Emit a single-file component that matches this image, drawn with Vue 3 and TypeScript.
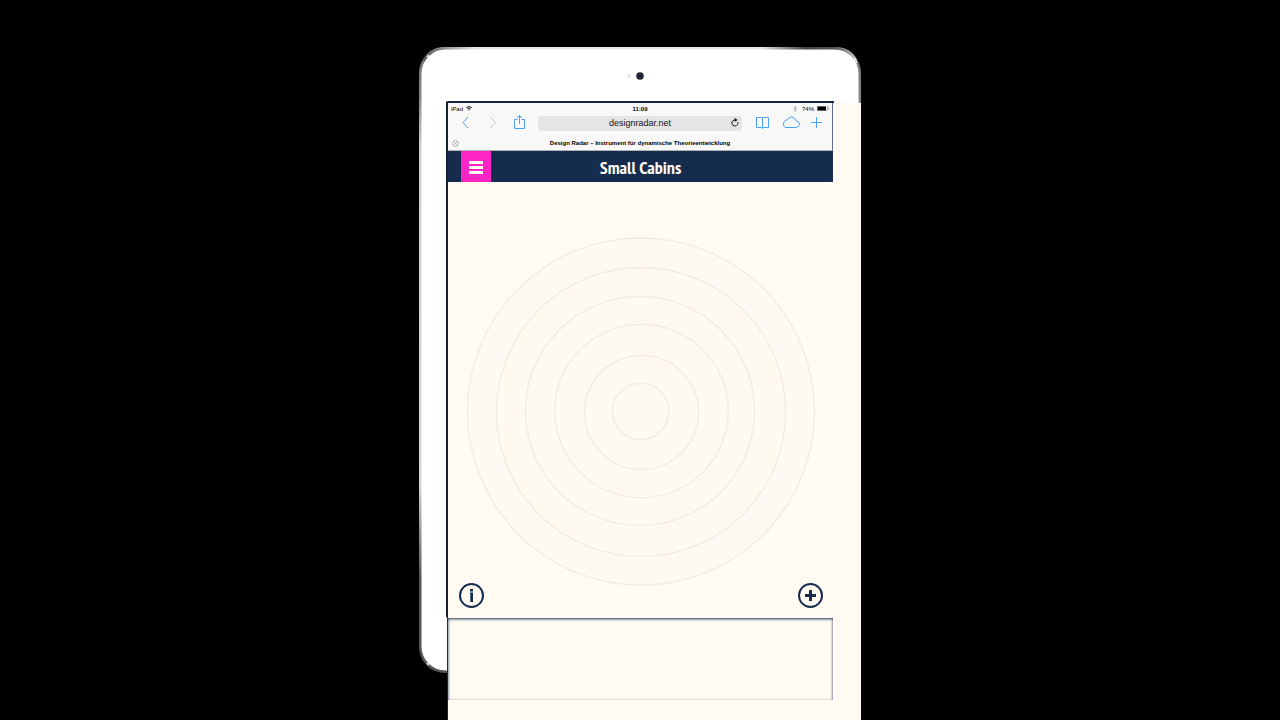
<script setup lang="ts">
import { ref } from 'vue'

interface Ring {
  cx: number
  cy: number
  r: number
  fill: string
}

const address = ref('designradar.net')

const rings: Ring[] = [
  { cx: 193, cy: 229.5, r: 173.5, fill: '#fff9f3' },
  { cx: 193, cy: 230, r: 144.5, fill: '#fffaef' },
  { cx: 192, cy: 229, r: 114.5, fill: '#fffaef' },
  { cx: 193.5, cy: 229, r: 86.8, fill: '#fffaef' },
  { cx: 193.5, cy: 230.5, r: 57, fill: '#fffaef' },
  { cx: 192.6, cy: 229.5, r: 28.2, fill: '#fffaef' },
]
</script>

<template>
  <main class="page">
    <div class="tablet">
      <svg class="shell" viewBox="0 0 442 626" aria-hidden="true">
        <defs>
          <linearGradient id="rimSide" x1="0" y1="0" x2="0" y2="1">
            <stop offset="0" stop-color="#888" />
            <stop offset="0.03" stop-color="#777" />
            <stop offset="0.08" stop-color="#888" />
            <stop offset="0.16" stop-color="#d0d0d0" />
            <stop offset="0.7" stop-color="#d6d6d6" />
            <stop offset="0.85" stop-color="#555" />
            <stop offset="1" stop-color="#555" />
          </linearGradient>
          <linearGradient id="rimTop" x1="0" y1="0" x2="1" y2="0">
            <stop offset="0" stop-color="#555" />
            <stop offset="0.07" stop-color="#aaa" />
            <stop offset="0.12" stop-color="#e6e6e6" />
            <stop offset="0.78" stop-color="#e6e6e6" />
            <stop offset="0.88" stop-color="#444" />
            <stop offset="0.95" stop-color="#555" />
            <stop offset="1" stop-color="#ccc" />
          </linearGradient>
        </defs>
        <rect width="442" height="626" rx="26" fill="url(#rimSide)" />
        <path d="M4 13Q10 0 26 0H416Q432 0 438 13L416 30H26Z" fill="url(#rimTop)" />
        <rect x="2.500" y="2.500" width="437" height="621" rx="24" fill="#fff" />
        <path d="M8 10L10 8M435 11L438 16M8 616L10 618" stroke="#eee" stroke-width="1.500" />
        <circle cx="210" cy="29" r="2" fill="#e8e8e8" />
        <circle cx="221" cy="29" r="3.800" fill="#23232b" />
        <circle cx="220.500" cy="29" r="1.800" fill="#17204a" />
      </svg>

      <div class="display">
        <div class="screen">
          <header class="browser">
            <div class="status">
              <span class="carrier">iPad
                <svg width="6" height="5" viewBox="0 0 12 10" aria-hidden="true">
                  <path d="M0 3Q6 -3 12 3L10.600 4.500Q6 0 1.400 4.500ZM2.500 5.500Q6 2.200 9.500 5.500L8.200 6.900Q6 5 3.800 6.900ZM4.500 7.800Q6 6.400 7.500 7.800L6 9.600Z" fill="#222" />
                </svg>
              </span>
              <strong>11:09</strong>
              <span class="power">
                <svg class="bluetooth" width="4" height="6" viewBox="0 0 4 6" aria-hidden="true">
                  <path d="M.5 1.500L3.500 4.300L2 5.700V.3L3.500 1.700L.5 4.500" fill="none" stroke="#999" stroke-width=".6" />
                </svg>
                74%
                <svg width="12" height="5" viewBox="0 0 12 5" aria-hidden="true">
                  <rect x=".25" y=".25" width="10.500" height="4.500" rx=".8" fill="none" stroke="#777" stroke-width=".5" />
                  <rect x=".5" y=".5" width="8.500" height="4" fill="#000" />
                  <path d="M11 1.500Q12.500 2.500 11 3.500Z" fill="#555" />
                </svg>
              </span>
            </div>

            <div class="toolbar">
              <nav class="tools tools-left">
                <button type="button" aria-label="Back">
                  <svg width="9" height="12" viewBox="0 0 9 12"><path d="M7 1L2 6.500L7 12" /></svg>
                </button>
                <button type="button" aria-label="Forward" disabled>
                  <svg width="9" height="12" viewBox="0 0 9 12"><path d="M2.500 1L7.500 6.500L2.500 12" /></svg>
                </button>
                <button type="button" aria-label="Share">
                  <svg width="13" height="16" viewBox="0 0 13 16"><path d="M4.500 5.500H1.500V14.500H11.500V5.500H8.500M6.500 10V1.500M4 4L6.500 1.500L9 4" /></svg>
                </button>
              </nav>
              <div class="address">
                <input v-model="address" type="text" aria-label="Address" />
                <button type="button" aria-label="Reload">
                  <svg width="8" height="9" viewBox="0 0 8 9">
                    <path d="M6.800 4.200A3 3 0 1 1 4.300 2" fill="none" stroke="#111" stroke-width="1" />
                    <path d="M3.700 0L6.700 2L3.700 3.800Z" fill="#111" />
                  </svg>
                </button>
              </div>
              <nav class="tools tools-right">
                <button type="button" aria-label="Bookmarks">
                  <svg width="15" height="14" viewBox="-1 -1 15 14"><path d="M6.500 2V12.500M6.500 2Q6.500 1.500 5.500 1.500H.5V11.500H5.500Q6.500 11.500 6.500 12.500Q6.500 11.500 7.500 11.500H12.500V1.500H7.500Q6.500 1.500 6.500 2" /></svg>
                </button>
                <button type="button" aria-label="iCloud tabs">
                  <svg width="18" height="12" viewBox="0 0 18 12"><path d="M4 11.500A3.300 3.300 0 0 1 2.600 5.600Q2.800 3.600 5.300 3.900Q7 .8 9.800 .9Q13.200 1.300 13.700 4.700Q17.300 5.200 17.500 8.200Q17.300 11.200 14 11.500Z" /></svg>
                </button>
                <button type="button" aria-label="New tab">
                  <svg width="11" height="12" viewBox="0 0 11 12"><path d="M5.500 1V12M0 6.500H11" /></svg>
                </button>
              </nav>
            </div>

            <div class="tab">
              <button type="button" aria-label="Close tab">
                <svg width="7" height="7" viewBox="0 0 7 7"><circle cx="3.500" cy="3.500" r="3" /><path d="M2.200 2.200L4.800 4.800M4.800 2.200L2.200 4.800" /></svg>
              </button>
              <strong>Design Radar – Instrument für dynamische Theorieentwicklung</strong>
            </div>
          </header>

          <div class="appbar">
            <button type="button" class="menu" aria-label="Menu">
              <svg width="14" height="13" viewBox="0 0 14 13"><path d="M0 1.500H14M0 6.500H14M0 11.500H14" stroke="#fffaf2" stroke-width="3" /></svg>
            </button>
            <h1>Small Cabins</h1>
          </div>

          <section class="radar">
            <svg class="rings" viewBox="0 0 385 436" aria-hidden="true">
              <circle v-for="ring in rings" :key="ring.r" :cx="ring.cx" :cy="ring.cy" :r="ring.r" :fill="ring.fill" stroke="#f1ece3" stroke-width="1.4" />
            </svg>
            <div class="actions">
              <button type="button" aria-label="Information">
                <svg width="25" height="25" viewBox="0 0 25 25">
                  <circle cx="12.500" cy="12.500" r="11.500" />
                  <path class="solid" d="M11 9.500H14V19H11.300V11H11ZM11 6H14V8.500H11Z" />
                </svg>
              </button>
              <button type="button" aria-label="Add">
                <svg width="25" height="25" viewBox="0 0 25 25">
                  <circle cx="12.500" cy="12.500" r="11.500" />
                  <path class="solid" d="M11 7H14V11H18V14H14V18H11V14H7V11H11Z" />
                </svg>
              </button>
            </div>
          </section>
          <section class="tray" aria-label="Tray"></section>
        </div>
      </div>
    </div>
  </main>
</template>

<style>
body {
  background: #000;
}
</style>

<style scoped>
.page {
  box-sizing: border-box;
  height: 100vh;
  padding: 47px 16px 0;
  overflow: hidden;
  background: #000;
  font-family: "Liberation Sans", Arial, sans-serif;
}
button {
  display: flex;
  align-items: center;
  justify-content: center;
  padding: 0;
  border: 0;
  background: none;
}
svg {
  display: block;
}
.tablet {
  position: relative;
  box-sizing: border-box;
  max-width: 442px;
  height: 100%;
  margin: 0 auto;
  padding: 56px 0 0 29px;
}
.shell {
  position: absolute;
  top: 0;
  left: 0;
  width: 100%;
}
.display {
  position: relative;
  height: 100%;
  background: #fffaf2;
  box-shadow: -1px 0 #152c4e;
}
.screen {
  position: relative;
  margin-right: 28px;
}
.screen::before {
  content: "";
  position: absolute;
  top: -2px;
  left: -2px;
  right: -1px;
  bottom: 82px;
  border-top: 2px solid #14253f;
  border-left: 2px solid #14202f;
  border-radius: 2px 0 0 2px;
  pointer-events: none;
}
.browser {
  background: #f8f8f8;
  border-right: 1px solid #60708c;
  border-bottom: 1px solid #b2b2b2;
}
.status {
  display: grid;
  grid-template-columns: 1fr auto 1fr;
  align-items: center;
  height: 11px;
  padding: 0 3px;
  font-size: 6px;
  line-height: 10px;
}
.carrier,
.power {
  display: flex;
  align-items: center;
  gap: 3px;
}
.power {
  justify-content: flex-end;
}
.bluetooth {
  margin-right: 2px;
}
.toolbar {
  display: grid;
  grid-template-columns: 90px 1fr 90px;
  align-items: center;
  height: 18px;
}
.tools {
  display: grid;
  height: 16px;
  padding-bottom: 2px;
}
.tools-left {
  grid-template-columns: repeat(3, 27px);
  padding-left: 4px;
}
.tools-right {
  grid-template-columns: 27px 30px 21px;
  padding-left: 7px;
}
.tools svg {
  overflow: visible;
  fill: none;
  stroke: #4ba1fa;
  stroke-width: 1;
}
.tools button:disabled svg {
  stroke: #c4c4c6;
}
.address {
  position: relative;
}
.address input {
  display: block;
  box-sizing: border-box;
  width: 100%;
  height: 15px;
  padding: 0 16px;
  border: 0;
  border-radius: 3px;
  background: #e5e5e7;
  color: #111;
  font: 9px "Liberation Sans", Arial, sans-serif;
  text-align: center;
}
.address button {
  position: absolute;
  top: 2px;
  right: 3px;
}
.tab {
  display: grid;
  box-sizing: border-box;
  grid-template-columns: 14px 1fr 14px;
  align-items: center;
  height: 18px;
  padding-top: 4px;
  font-size: 6px;
  text-align: center;
}
.tab svg {
  fill: none;
  stroke: #999;
  stroke-width: 0.7;
}
.appbar {
  display: grid;
  grid-template-columns: 30px 1fr 30px;
  height: 31px;
  padding: 0 13px;
  background: #152c4e;
}
.menu {
  height: 31px;
  padding-top: 2px;
  background: #ff25c4;
}
h1 {
  margin: 0;
  color: #fffaf2;
  font-family: "PT Sans Narrow", "Liberation Sans Narrow", "Open Sans", sans-serif;
  font-size: 18px;
  font-weight: 700;
  line-height: 33px;
  text-align: center;
}
.radar {
  position: relative;
}
.rings {
  width: 100%;
}
.actions {
  position: absolute;
  right: 10px;
  bottom: 10px;
  left: 11px;
  display: flex;
  justify-content: space-between;
}
.actions svg {
  fill: none;
  stroke: #152c4e;
  stroke-width: 2;
}
.actions .solid {
  fill: #152c4e;
  stroke: none;
}
.tray {
  box-sizing: border-box;
  height: 82px;
  box-shadow: inset 0 1px 3px #152c4e;
}
</style>
